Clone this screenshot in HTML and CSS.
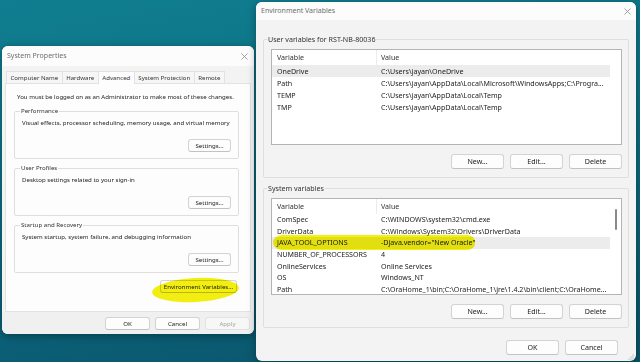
FILE: index.html
```html
<!DOCTYPE html>
<html lang="en">
<head>
    <meta charset="UTF-8">
    <title>System Properties - Environment Variables</title>
    <link rel="stylesheet" href="styles.css">
</head>
<body>

<div class="desktop">

    <!-- System Properties dialog -->
    <div class="window sysprops">
        <div class="titlebar">
            <span class="title">System Properties</span>
            <svg class="close" width="7" height="7" viewBox="0 0 7 7"><path d="M0.5 0.5L6.5 6.5M6.5 0.5L0.5 6.5"/></svg>
        </div>
        <div class="tabs">
            <span class="tab">Computer Name</span>
            <span class="tab">Hardware</span>
            <span class="tab active">Advanced</span>
            <span class="tab">System Protection</span>
            <span class="tab">Remote</span>
        </div>
        <div class="page">
            <p class="intro">You must be logged on as an Administrator to make most of these changes.</p>
            <fieldset class="group">
                <legend>Performance</legend>
                <p>Visual effects, processor scheduling, memory usage, and virtual memory</p>
                <div class="actions"><button class="btn">Settings...</button></div>
            </fieldset>
            <fieldset class="group">
                <legend>User Profiles</legend>
                <p>Desktop settings related to your sign-in</p>
                <div class="actions"><button class="btn">Settings...</button></div>
            </fieldset>
            <fieldset class="group">
                <legend>Startup and Recovery</legend>
                <p>System startup, system failure, and debugging information</p>
                <div class="actions"><button class="btn">Settings...</button></div>
            </fieldset>
            <div class="env-row"><button class="btn env-btn">Environment Variables...</button></div>
        </div>
        <div class="footer">
            <button class="btn">OK</button>
            <button class="btn">Cancel</button>
            <button class="btn" disabled>Apply</button>
        </div>
        <span class="marker marker-env"></span>
    </div>

    <!-- Environment Variables dialog -->
    <div class="window envvars">
        <div class="titlebar">
            <span class="title">Environment Variables</span>
            <svg class="close" width="7" height="7" viewBox="0 0 7 7"><path d="M0.5 0.5L6.5 6.5M6.5 0.5L0.5 6.5"/></svg>
        </div>
        <div class="env-body">
            <fieldset class="group">
                <legend>User variables for RST-NB-80036</legend>
                <div class="list user-list">
                    <div class="rows">
                        <div class="row head"><span class="var">Variable</span><span class="val">Value</span></div>
                        <div class="row sel"><span class="var">OneDrive</span><span class="val">C:\Users\jayan\OneDrive</span></div>
                        <div class="row"><span class="var">Path</span><span class="val">C:\Users\jayan\AppData\Local\Microsoft\WindowsApps;C:\Progra...</span></div>
                        <div class="row"><span class="var">TEMP</span><span class="val">C:\Users\jayan\AppData\Local\Temp</span></div>
                        <div class="row"><span class="var">TMP</span><span class="val">C:\Users\jayan\AppData\Local\Temp</span></div>
                    </div>
                    <div class="scroll"></div>
                </div>
                <div class="actions">
                    <button class="btn">New...</button>
                    <button class="btn">Edit...</button>
                    <button class="btn">Delete</button>
                </div>
            </fieldset>
            <fieldset class="group sys-group">
                <legend>System variables</legend>
                <div class="list sys-list">
                    <div class="rows">
                        <div class="row head"><span class="var">Variable</span><span class="val">Value</span></div>
                        <div class="row"><span class="var">ComSpec</span><span class="val">C:\WINDOWS\system32\cmd.exe</span></div>
                        <div class="row"><span class="var">DriverData</span><span class="val">C:\Windows\System32\Drivers\DriverData</span></div>
                        <div class="row sel"><span class="var">JAVA_TOOL_OPTIONS</span><span class="val">-Djava.vendor="New Oracle"</span></div>
                        <div class="row"><span class="var">NUMBER_OF_PROCESSORS</span><span class="val">4</span></div>
                        <div class="row"><span class="var">OnlineServices</span><span class="val">Online Services</span></div>
                        <div class="row"><span class="var">OS</span><span class="val">Windows_NT</span></div>
                        <div class="row"><span class="var">Path</span><span class="val">C:\OraHome_1\bin;C:\OraHome_1\jre\1.4.2\bin\client;C:\OraHome...</span></div>
                    </div>
                    <div class="scroll"><span class="thumb"></span></div>
                </div>
                <div class="actions">
                    <button class="btn">New...</button>
                    <button class="btn">Edit...</button>
                    <button class="btn">Delete</button>
                </div>
            </fieldset>
            <div class="dialog-actions">
                <button class="btn">OK</button>
                <button class="btn">Cancel</button>
            </div>
        </div>
        <svg class="grip" width="6" height="6" viewBox="0 0 6 6">
            <circle cx="5" cy="1" r="0.6"/><circle cx="3" cy="3" r="0.6"/><circle cx="5" cy="3" r="0.6"/>
            <circle cx="1" cy="5" r="0.6"/><circle cx="3" cy="5" r="0.6"/><circle cx="5" cy="5" r="0.6"/>
        </svg>
        <span class="marker marker-java"></span>
    </div>

</div>

</body>
</html>
```

FILE: styles.css
```css
body {
    margin: 0;
    padding: 0;
    font-family: "Noto Sans", "Open Sans", sans-serif;
    color: #1b1b1b;
}
.desktop {
    position: relative;
    width: 640px;
    height: 362px;
    overflow: hidden;
    background: linear-gradient(170deg, #107e90 0%, #0d7386 35%, #0b6077 70%, #0a5268 100%);
}
.window {
    position: absolute;
    display: flex;
    flex-direction: column;
    background: #f3f3f3;
    border-radius: 6px;
    box-shadow: 0 2px 8px rgba(0, 0, 0, 0.35);
    overflow: hidden;
    font-size: 7.1px;
    line-height: 10px;
    white-space: nowrap;
}
.sysprops {
    left: 2px;
    top: 46px;
    width: 252px;
    height: 288px;
    font-size: 6.1px;
}
.envvars {
    left: 256px;
    top: 2px;
    width: 380px;
    height: 359px;
}
.titlebar {
    display: flex;
    align-items: center;
    justify-content: space-between;
    background: #fcfcfc;
    flex-shrink: 0;
}
.sysprops .titlebar {
    height: 20px;
    padding: 0 6px 0 5px;
}
.envvars .titlebar {
    height: 18px;
    padding: 0 5px 0 5px;
}
.title {
    color: #6e6e6e;
    font-size: 7px;
}
.close path {
    stroke: #8c8c8c;
    stroke-width: 0.8;
    fill: none;
}

/* tabs */
.tabs {
    display: flex;
    align-items: flex-end;
    height: 17px;
    padding-left: 4px;
}
.tab {
    height: 11px;
    line-height: 11px;
    padding: 0 3.5px;
    border: 1px solid #e2e2e2;
    border-bottom: none;
    background: #f6f6f6;
    color: #333;
    margin-right: -1px;
}
.tab.active {
    height: 12px;
    background: #fdfdfd;
    position: relative;
    z-index: 1;
    margin-bottom: -1px;
}
.page {
    flex: 1;
    margin: 0 3px;
    padding: 8px 11px 0 8px;
    background: #fdfdfd;
    border: 1px solid #e2e2e2;
}
.page p {
    margin: 0;
}
.intro {
    padding-left: 3px;
    margin-bottom: 4px !important;
}
.group {
    margin: 0;
    padding: 0 7px 6px 6px;
    border: 1px solid #dedede;
    border-radius: 2px;
    min-width: 0;
}
.group legend {
    padding: 0 1px;
    margin-left: -1px;
    color: #333;
}
.page .group {
    margin-bottom: 4px;
}
.page .group p {
    margin-top: 2px;
    padding-left: 1px;
}
.actions {
    display: flex;
    justify-content: flex-end;
    gap: 6px;
}
.page .actions {
    margin-top: 11px;
}
.btn {
    font-family: inherit;
    font-size: inherit;
    color: #1b1b1b;
    background: #fdfdfd;
    border: 1px solid #d3d3d3;
    border-bottom-color: #c2c2c2;
    border-radius: 3px;
    padding: 0;
    height: 13px;
    width: 43px;
    line-height: 11px;
    white-space: nowrap;
}
.btn:disabled {
    color: #a3a3a3;
    background: #f7f7f7;
    border-color: #e2e2e2;
}
.env-row {
    display: flex;
    justify-content: flex-end;
    padding-right: 2px;
    margin-top: 7px;
}
.env-btn {
    width: 77px;
}
.footer {
    height: 22px;
    display: flex;
    justify-content: flex-end;
    align-items: center;
    gap: 5px;
    padding-right: 4px;
    background: #f0f0f0;
    flex-shrink: 0;
}
.footer .btn {
    width: 45px;
}

/* environment variables */
.env-body {
    flex: 1;
    padding: 14px 7px 0 7px;
}
.env-body .group {
    padding: 0 6px 8px 7px;
}
.env-body .group legend {
    margin-left: -4px;
}
.sys-group {
    margin-top: 5px !important;
}
.list {
    display: flex;
    box-sizing: border-box;
    margin-top: 5px;
    background: #fff;
    border: 1px solid #b4b4b4;
    overflow: hidden;
}
.user-list {
    height: 96px;
}
.sys-list {
    height: 97px;
}
.rows {
    flex: 1;
    min-width: 0;
}
.row {
    display: flex;
    height: 12px;
    line-height: 12px;
}
.sys-list .row {
    height: 11.7px;
    line-height: 11.7px;
}
.row.head,
.sys-list .row.head {
    height: 15px;
    line-height: 15px;
    color: #333;
}
.row.sel {
    background: #ececec;
}
.var {
    width: 105px;
    flex-shrink: 0;
    padding-left: 5px;
    box-sizing: border-box;
}
.val {
    flex: 1;
    padding-left: 4px;
    overflow: hidden;
}
.head .var {
    border-right: 1px solid #ececec;
}
.scroll {
    width: 11px;
    flex-shrink: 0;
    display: flex;
    justify-content: center;
}
.thumb {
    width: 2px;
    height: 21px;
    margin-top: 10px;
    border-radius: 1px;
    background: #8a8a8a;
}
.env-body .actions {
    margin-top: 9px;
}
.env-body .btn {
    width: 53px;
    height: 15px;
    line-height: 13px;
}
.dialog-actions {
    display: flex;
    justify-content: flex-end;
    gap: 6px;
    margin-top: 12px;
    padding-right: 11px;
}
.grip {
    position: absolute;
    right: 2px;
    bottom: 1px;
}
.grip circle {
    fill: #9a9a9a;
}

/* yellow highlighter strokes */
.marker {
    position: absolute;
    background: rgb(244, 240, 18);
    mix-blend-mode: multiply;
}
.marker-java {
    left: 17px;
    top: 233px;
    width: 202px;
    height: 15px;
    border-radius: 10px 8px 8px 10px / 8px 7px 7px 8px;
}
.marker-env {
    left: 150px;
    top: 232px;
    width: 87px;
    height: 24px;
    border-radius: 50%;
    transform: rotate(-3deg);
}
```
